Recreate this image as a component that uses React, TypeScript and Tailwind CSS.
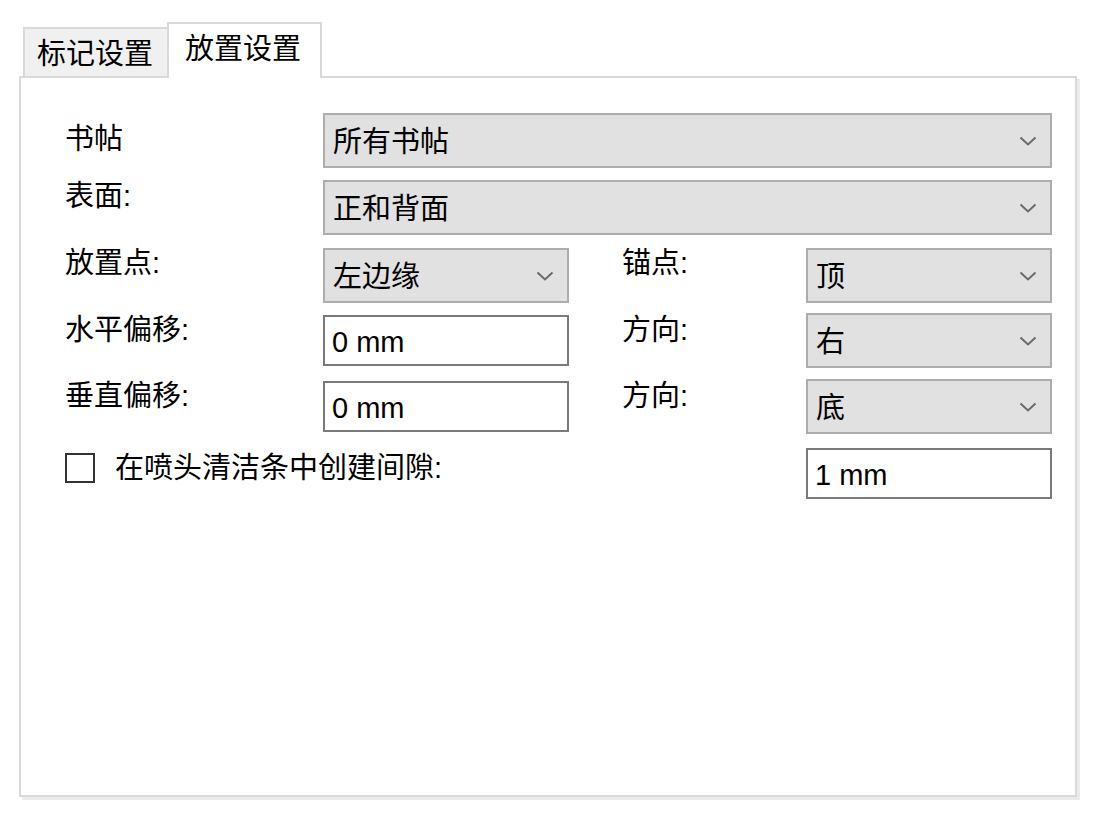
import React from 'react';

const font = "font-['Liberation_Sans','Noto_Sans_CJK_SC',sans-serif]";

const Chevron = () => (
  <svg width="18" height="10" viewBox="0 0 18 10" className="shrink-0">
    <polyline points="1.5,1.5 9,8.5 16.5,1.5" fill="none" stroke="#6a6a6a" strokeWidth="2" />
  </svg>
);

const Combo = ({ value }: { value: string }) => (
  <div className="flex h-[55px] w-full items-center justify-between border-2 border-[#adadad] bg-[#e1e1e1] pl-[8px] pr-[13px]">
    <span className="pt-[3px] leading-none">{value}</span>
    <Chevron />
  </div>
);

const TextBox = ({ value }: { value: string }) => (
  <div className="flex h-[51px] w-[246px] items-center border-2 border-[#7a7a7a] bg-white pl-[7px]">
    <span className="pt-[4px] leading-none">{value}</span>
  </div>
);

const Label = ({ text, top = 'mt-[1px]' }: { text: string; top?: string }) => (
  <div className={`leading-none ${top}`}>{text}</div>
);

const App = () => {
  return (
    <div className={`min-h-screen bg-white pl-[19px] pt-[22px] text-[29px] text-black ${font}`}>
      <div className="w-[1058px]">
        {/* tabs */}
        <div className="flex h-[54px] items-end pl-[4px]">
          <div className="flex h-[49px] w-[144px] items-center border-l-2 border-t-2 border-[#d9d9d9] bg-[#f0f0f0] pl-[12px]">
            <span className="pt-[3px] leading-none">标记设置</span>
          </div>
          <div className="relative z-10 -mb-[2px] flex h-[56px] w-[155px] items-center border-x-2 border-t-2 border-[#d9d9d9] bg-white pl-[16px]">
            <span className="pb-[4px] leading-none">放置设置</span>
          </div>
        </div>

        {/* panel */}
        <div className="h-[721px] border-2 border-[#d9d9d9] bg-white pl-[44px] pt-[35px] shadow-[3px_3px_0_#ebebeb]">
          <div className="flex h-[67px] items-start">
            <div className="w-[258px]">
              <Label text="书帖" top="mt-[12px]" />
            </div>
            <div className="w-[729px]">
              <Combo value="所有书帖" />
            </div>
          </div>

          <div className="flex h-[68px] items-start">
            <div className="w-[258px]">
              <Label text="表面:" top="mt-[2px]" />
            </div>
            <div className="w-[729px]">
              <Combo value="正和背面" />
            </div>
          </div>

          <div className="flex h-[67px] items-start">
            <div className="w-[258px]">
              <Label text="放置点:" />
            </div>
            <div className="w-[246px]">
              <Combo value="左边缘" />
            </div>
            <div className="w-[237px] pl-[53px]">
              <Label text="锚点:" />
            </div>
            <div className="w-[246px]">
              <Combo value="顶" />
            </div>
          </div>

          <div className="flex h-[66px] items-start">
            <div className="w-[258px]">
              <Label text="水平偏移:" />
            </div>
            <TextBox value="0 mm" />
            <div className="w-[237px] pl-[53px]">
              <Label text="方向:" />
            </div>
            <div className="w-[246px] -mt-[2px]">
              <Combo value="右" />
            </div>
          </div>

          <div className="flex h-[67px] items-start">
            <div className="w-[258px]">
              <Label text="垂直偏移:" />
            </div>
            <TextBox value="0 mm" />
            <div className="w-[237px] pl-[53px]">
              <Label text="方向:" />
            </div>
            <div className="w-[246px] -mt-[2px]">
              <Combo value="底" />
            </div>
          </div>

          <div className="flex h-[67px] items-start">
            <div className="flex w-[741px] items-center pt-[5px]">
              <div className="h-[30px] w-[30px] border-2 border-[#333333] bg-white" />
              <span className="ml-[20px] leading-none">在喷头清洁条中创建间隙:</span>
            </div>
            <TextBox value="1 mm" />
          </div>
        </div>
      </div>
    </div>
  );
};

export default App;
